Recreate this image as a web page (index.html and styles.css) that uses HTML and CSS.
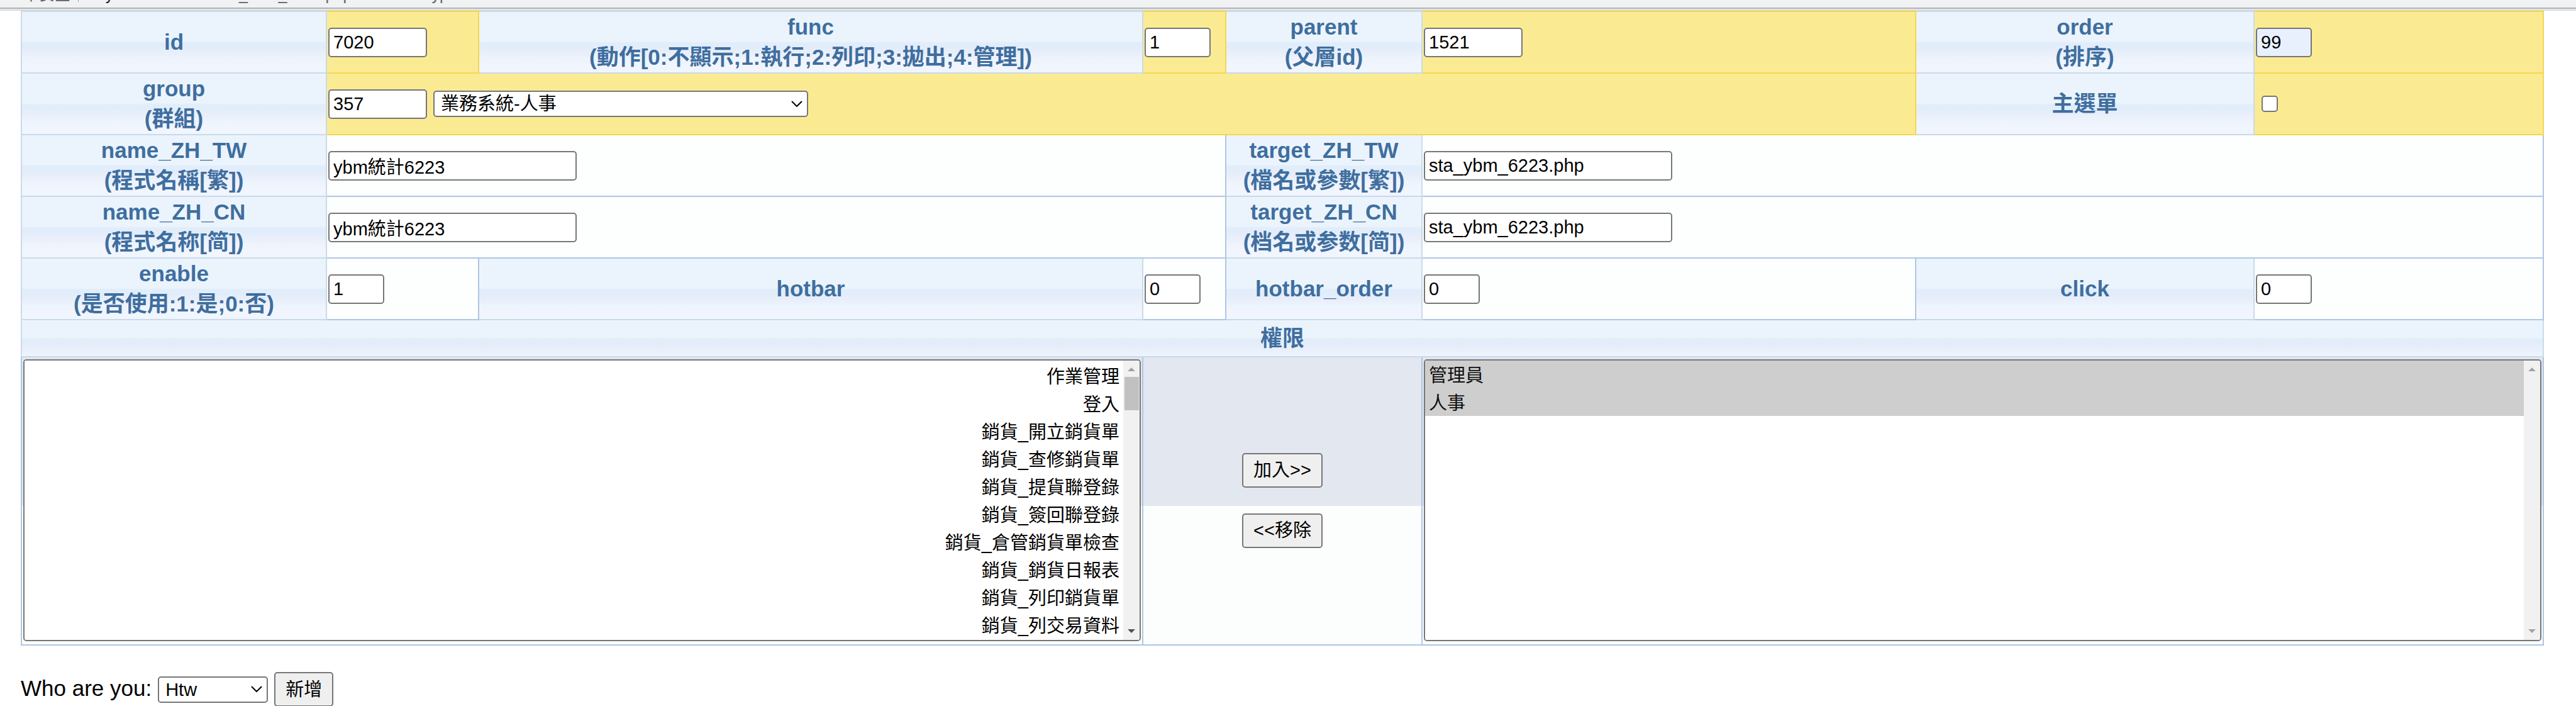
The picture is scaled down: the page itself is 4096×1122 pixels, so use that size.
FILE: index.html
```html
<!DOCTYPE html>
<html lang="zh-Hant">
<head>
<meta charset="utf-8">
<title>menu</title>
<link rel="stylesheet" href="styles.css">
</head>
<body>
<header class="address-bar">
  <span class="security">不安全</span>
  <span class="divider"></span>
  <span class="url"><span class="host">my.site.com.tw</span>/menu_data_edit2.php?id=7020&amp;type</span>
</header>
<main class="page">
  <form>
    <table class="form-table">
      <colgroup>
        <col class="col-name"><col class="col-id"><col class="col-func"><col class="col-flag">
        <col class="col-parent"><col class="col-target"><col class="col-order"><col class="col-last">
      </colgroup>
      <tbody>
        <tr>
          <th><label for="id">id</label></th>
          <td class="key"><input class="field w-code" id="id" type="text" value="7020"></td>
          <th><label for="func">func<br>(動作[0:不顯示;1:執行;2:列印;3:拋出;4:管理])</label></th>
          <td class="key"><input class="field w-func" id="func" type="text" value="1"></td>
          <th><label for="parent">parent<br>(父層id)</label></th>
          <td class="key"><input class="field w-code" id="parent" type="text" value="1521"></td>
          <th><label for="order">order<br>(排序)</label></th>
          <td class="key"><input class="field w-short autofilled" id="order" type="text" value="99"></td>
        </tr>
        <tr>
          <th><label for="group">group<br>(群組)</label></th>
          <td class="key" colspan="5">
            <div class="inline">
              <input class="field w-code" id="group" type="text" value="357">
              <span class="dropdown">
                <select class="w-group" aria-label="群組"><option>業務系統-人事</option></select>
                <svg class="chevron" viewBox="0 0 18 10"><path d="M1 1L9 9L17 1"/></svg>
              </span>
            </div>
          </td>
          <th><label for="main">主選單</label></th>
          <td class="key"><input class="check" id="main" type="checkbox"></td>
        </tr>
        <tr>
          <th><label for="name-tw">name_ZH_TW<br>(程式名稱[繁])</label></th>
          <td colspan="3"><input class="field w-long" id="name-tw" type="text" value="ybm統計6223"></td>
          <th><label for="target-tw">target_ZH_TW<br>(檔名或參數[繁])</label></th>
          <td colspan="3"><input class="field w-long" id="target-tw" type="text" value="sta_ybm_6223.php"></td>
        </tr>
        <tr>
          <th><label for="name-cn">name_ZH_CN<br>(程式名称[简])</label></th>
          <td colspan="3"><input class="field w-long" id="name-cn" type="text" value="ybm統計6223"></td>
          <th><label for="target-cn">target_ZH_CN<br>(档名或参数[简])</label></th>
          <td colspan="3"><input class="field w-long" id="target-cn" type="text" value="sta_ybm_6223.php"></td>
        </tr>
        <tr>
          <th><label for="enable">enable<br>(是否使用:1:是;0:否)</label></th>
          <td><input class="field w-short" id="enable" type="text" value="1"></td>
          <th><label for="hotbar">hotbar</label></th>
          <td><input class="field w-short" id="hotbar" type="text" value="0"></td>
          <th><label for="hotbar-order">hotbar_order</label></th>
          <td><input class="field w-short" id="hotbar-order" type="text" value="0"></td>
          <th><label for="click">click</label></th>
          <td><input class="field w-short" id="click" type="text" value="0"></td>
        </tr>
        <tr>
          <th class="section" colspan="8">權限</th>
        </tr>
        <tr>
          <td class="rights" colspan="3">
            <div class="listbox">
              <select class="align-end" size="10" multiple aria-label="可選權限">
                <option>作業管理</option>
                <option>登入</option>
                <option>銷貨_開立銷貨單</option>
                <option>銷貨_查修銷貨單</option>
                <option>銷貨_提貨聯登錄</option>
                <option>銷貨_簽回聯登錄</option>
                <option>銷貨_倉管銷貨單檢查</option>
                <option>銷貨_銷貨日報表</option>
                <option>銷貨_列印銷貨單</option>
                <option>銷貨_列交易資料</option>
              </select>
              <div class="scrollbar" aria-hidden="true">
                <span class="arrow up"></span><span class="thumb"></span><span class="arrow down active"></span>
              </div>
            </div>
          </td>
          <td class="rights" colspan="2">
            <div class="transfer">
              <button type="button">加入&gt;&gt;</button>
              <button type="button">&lt;&lt;移除</button>
            </div>
          </td>
          <td class="rights" colspan="3">
            <div class="listbox">
              <select size="10" multiple aria-label="已選權限">
                <option selected>管理員</option>
                <option selected>人事</option>
              </select>
              <div class="scrollbar" aria-hidden="true">
                <span class="arrow up"></span><span class="arrow down"></span>
              </div>
            </div>
          </td>
        </tr>
      </tbody>
    </table>
    <div class="actions">
      <label for="who">Who are you:</label>
      <span class="dropdown">
        <select class="w-who" id="who"><option>Htw</option></select>
        <svg class="chevron" viewBox="0 0 18 10"><path d="M1 1L9 9L17 1"/></svg>
      </span>
      <button type="button">新增</button>
    </div>
  </form>
</main>
</body>
</html>
```
FILE: styles.css
```css
* {
  box-sizing: border-box;
}

body {
  margin: 0;
  background: #fff;
  color: #000;
  font: 35px/40px "Liberation Sans", "Noto Sans CJK TC", sans-serif;
}

/* Bottom edge of the browser's address bar */
.address-bar {
  display: flex;
  align-items: flex-end;
  height: 17px;
  padding: 0 0 14px 37px;
  overflow: hidden;
  background: linear-gradient(#f0f2f4 12px, #b0b0b1 12px 14px, #f0f2f4 14px 15px, #dadbdc 15px);
  color: #5f6368;
  font-size: 25px;
  line-height: 24px;
  white-space: nowrap;
}

.divider {
  width: 1px;
  height: 24px;
  margin: 0 22px 0 12px;
  background: #9aa0a6;
}

.host {
  color: #202124;
}

.page {
  padding: 0 53px 0 33px;
}

/* Form table */
.form-table {
  width: 100%;
  table-layout: fixed;
  border-collapse: collapse;
}

.col-name { width: 485px; }
.col-id { width: 242px; }
.col-func { width: 1056px; }
.col-flag { width: 132px; }
.col-parent { width: 312px; }
.col-target { width: 785px; }
.col-order { width: 538px; }
.col-last { width: 460px; }

.form-table th,
.form-table td {
  height: 98px;
  padding: 0;
}

.form-table th {
  border: 2px solid #c8daeb;
  background: linear-gradient(#ebf4fc 47px, #e1edfa 49px, #e1edfa 55px, #e8eefa 64px, #edf3fc 73px, #f1f5fd 84px) center / 100% 96px;
  color: #3f6e9f;
  font-weight: bold;
  line-height: 48px;
  text-align: center;
}

.form-table .section {
  height: 59px;
}

.form-table td {
  padding-left: 2px;
  border: 2px solid #adc7e3;
  background: #fdfefe;
  text-align: left;
  vertical-align: middle;
}

.form-table .key {
  border-color: #f5d64e;
  background: #faeb93;
}

.form-table .rights {
  padding: 3px 2px 5px;
  background: linear-gradient(#e2e7f0 236px, #fcfdfd 236px);
}

/* Controls */
.field,
.check,
select,
button {
  margin: 0;
  border: 2px solid #767676;
  border-radius: 5px;
  background: #fff;
  color: #000;
  font: 29px/36px "Liberation Sans", "Noto Sans CJK TC", sans-serif;
}

.field {
  display: block;
  height: 47px;
  padding: 0 6px;
}

.w-short { width: 89px; }
.w-func { width: 105px; }
.w-code { width: 157px; }
.w-long { width: 395px; }
.w-group { width: 596px; }
.w-who { width: 175px; }

.autofilled {
  background: #e8f0fe;
}

.check {
  display: block;
  width: 26px;
  height: 26px;
  margin-left: 9px;
  appearance: none;
}

.inline {
  display: flex;
  align-items: center;
  gap: 10px;
}

.dropdown {
  position: relative;
}

.inline .dropdown {
  display: flex;
}

.dropdown select {
  height: 42px;
  padding: 0 30px 0 10px;
  appearance: none;
}

.chevron {
  position: absolute;
  top: 16px;
  right: 9px;
  width: 18px;
  height: 10px;
  fill: none;
  stroke: #000;
  stroke-width: 2;
  pointer-events: none;
}

button {
  height: 55px;
  padding: 0 16px;
  background: #efefef;
}

/* Permission lists */
.listbox {
  display: flex;
  height: 448px;
  overflow: hidden;
  border: 2px solid #767676;
  border-radius: 5px;
  background: #fff;
}

.listbox select {
  flex: 1;
  height: 444px;
  padding: 0;
  overflow: hidden;
  border: 0;
  border-radius: 0;
  scrollbar-width: none;
}

.listbox option {
  height: 44px;
  min-height: 44px;
  padding: 0 6px;
  line-height: 44px;
}

.listbox option:checked {
  background: #cecece;
  color: #101010;
}

.listbox .align-end {
  padding-top: 2px;
  text-align: right;
}

.scrollbar {
  display: flex;
  flex-direction: column;
  align-items: center;
  width: 26px;
  padding: 11px 0;
  background: #f1f1f1;
}

.arrow {
  border: 6px solid transparent;
}

.arrow.up {
  border-top: 0;
  border-bottom-color: #a3a3a3;
}

.arrow.down {
  margin-top: auto;
  border-bottom: 0;
  border-top-color: #a3a3a3;
}

.arrow.active {
  border-top-color: #505050;
}

.thumb {
  width: 23px;
  height: 53px;
  margin-top: 9px;
  background: #c1c1c1;
}

.transfer {
  display: flex;
  flex-direction: column;
  align-items: center;
  gap: 41px;
}

.actions {
  display: flex;
  align-items: baseline;
  gap: 10px;
  margin-top: 42px;
}
```
